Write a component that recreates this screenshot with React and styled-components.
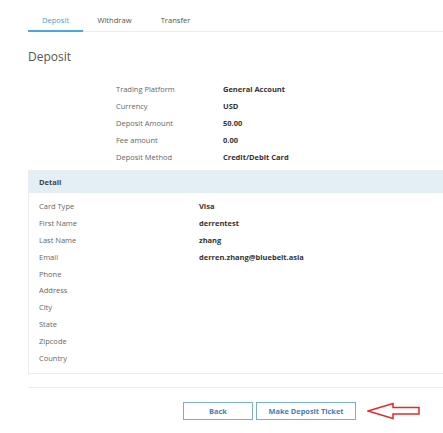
import React from 'react';
import styled, { createGlobalStyle } from 'styled-components';

const GlobalStyle = createGlobalStyle`
  html, body {
    margin: 0;
    padding: 0;
    background: #fff;
    overflow: hidden;
  }
  body {
    font-family: "Open Sans", "Liberation Sans", Arial, sans-serif;
    color: #333;
  }
`;

const Page = styled.div`
  width: 443px;
  padding-left: 28px;
  box-sizing: border-box;
`;

const TabBar = styled.div`
  display: flex;
  margin-top: 12px;
  border-bottom: 1px solid #ececec;
`;

const Tab = styled.div`
  width: ${p => p.w}px;
  text-align: center;
  font-size: 7.6px;
  line-height: 16px;
  padding-bottom: 2px;
  color: ${p => (p.active ? '#4a9fd8' : '#555')};
  border-bottom: 2px solid ${p => (p.active ? '#4aa6dc' : 'transparent')};
  margin-bottom: -1px;
`;

const Heading = styled.h2`
  margin: 17px 0 0;
  font-size: 12px;
  font-weight: 400;
  color: #555;
  line-height: 16px;
`;

const Summary = styled.div`
  display: grid;
  grid-template-columns: 107px auto;
  grid-auto-rows: 16.8px;
  margin: 16px 0 0 88px;
  align-items: center;
`;

const Label = styled.div`
  font-size: 7.5px;
  color: #666;
`;

const Value = styled.div`
  font-size: 7.5px;
  font-weight: 700;
  color: #333;
`;

const DetailBox = styled.div`
  margin-top: 5px;
  border: 1px solid #ececec;
  border-right: none;
`;

const DetailHeader = styled.div`
  height: 22px;
  background: #e3eef5;
  display: flex;
  align-items: center;
  padding-left: 10px;
  font-size: 7.5px;
  font-weight: 700;
  color: #444;
`;

const DetailRows = styled.div`
  display: grid;
  grid-template-columns: 160px auto;
  grid-auto-rows: 16.8px;
  align-items: center;
  padding: 5px 0 7px 10px;
`;

const Divider = styled.div`
  height: 1px;
  background: #ededed;
  margin-top: 13px;
`;

const ButtonRow = styled.div`
  display: flex;
  align-items: center;
  margin: 14px 0 0 155px;
  gap: 3px;
`;

const Button = styled.button`
  width: ${p => p.w}px;
  height: 18px;
  padding: 0;
  background: #fff;
  border: 1px solid #79aedb;
  color: #3f7fb9;
  font-family: inherit;
  font-size: 7.4px;
  font-weight: 700;
`;

const Arrow = styled.svg`
  margin-left: 8px;
  display: block;
`;

const summary = [
  ['Trading Platform', 'General Account'],
  ['Currency', 'USD'],
  ['Deposit Amount', '50.00'],
  ['Fee amount', '0.00'],
  ['Deposit Method', 'Credit/Debit Card'],
];

const details = [
  ['Card Type', 'Visa'],
  ['First Name', 'derrentest'],
  ['Last Name', 'zhang'],
  ['Email', 'derren.zhang@bluebelt.asia'],
  ['Phone', ''],
  ['Address', ''],
  ['City', ''],
  ['State', ''],
  ['Zipcode', ''],
  ['Country', ''],
];

export default function App() {
  return (
    <Page>
      <GlobalStyle />
      <TabBar>
        <Tab w={55} active>Deposit</Tab>
        <Tab w={63}>Withdraw</Tab>
        <Tab w={59}>Transfer</Tab>
      </TabBar>
      <Heading>Deposit</Heading>
      <Summary>
        {summary.map(([l, v]) => (
          <React.Fragment key={l}>
            <Label>{l}</Label>
            <Value>{v}</Value>
          </React.Fragment>
        ))}
      </Summary>
      <DetailBox>
        <DetailHeader>Detail</DetailHeader>
        <DetailRows>
          {details.map(([l, v]) => (
            <React.Fragment key={l}>
              <Label>{l}</Label>
              <Value>{v}</Value>
            </React.Fragment>
          ))}
        </DetailRows>
      </DetailBox>
      <Divider />
      <ButtonRow>
        <Button w={70}>Back</Button>
        <Button w={100}>Make Deposit Ticket</Button>
        <Arrow width="56" height="18" viewBox="0 0 56 18">
          <polygon
            points="1,9 26,1.5 26,5.5 52,5.5 52,12 26,12 26,16.5"
            fill="none"
            stroke="#e8262b"
            strokeWidth="1.5"
            strokeLinejoin="miter"
          />
        </Arrow>
      </ButtonRow>
    </Page>
  );
}
